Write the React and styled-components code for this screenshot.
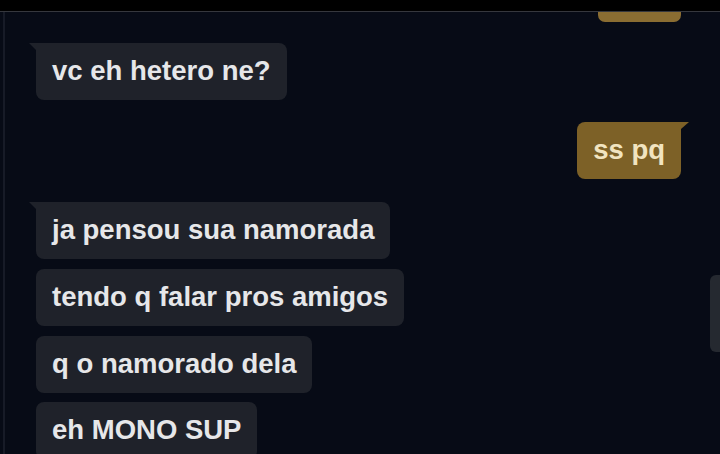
import styled, { createGlobalStyle } from "styled-components";

const GlobalStyle = createGlobalStyle`
  html, body {
    margin: 0;
    padding: 0;
    background: #070b16;
  }
`;

const messages = [
  { id: 1, text: "vc eh hetero ne?", mine: false, first: true, gap: 21 },
  { id: 2, text: "ss pq", mine: true, first: true, gap: 22 },
  { id: 3, text: "ja pensou sua namorada", mine: false, first: true, gap: 23 },
  { id: 4, text: "tendo q falar pros amigos", mine: false, gap: 10 },
  { id: 5, text: "q o namorado dela", mine: false, gap: 10 },
  { id: 6, text: "eh MONO SUP", mine: false, gap: 9 },
];

const App = () => {
  return (
    <>
      <GlobalStyle />
      <Screen>
        <TopBar />
        <Chat>
          <Stub />
          {messages.map((m) => (
            <Row key={m.id} $mine={m.mine} $gap={m.gap}>
              <Bubble $mine={m.mine} $first={m.first}>
                {m.text}
              </Bubble>
            </Row>
          ))}
        </Chat>
        <EdgeTab />
      </Screen>
    </>
  );
};
export default App;

const Screen = styled.div`
  position: relative;
  width: 720px;
  height: 454px;
  overflow: hidden;
  background: #070b16;
  display: flex;
  flex-direction: column;
`;
const TopBar = styled.div`
  height: 11px;
  flex-shrink: 0;
  background: #000;
  border-bottom: 1px solid #35373d;
`;
const Chat = styled.div`
  flex: 1;
  margin-left: 3px;
  border-left: 2px solid #171b27;
  padding: 0 39px 0 31px;
  display: flex;
  flex-direction: column;
`;
const Stub = styled.div`
  align-self: flex-end;
  width: 83px;
  height: 10px;
  background: #8a6d32;
  border-radius: 0 0 7px 7px;
`;
const Row = styled.div`
  display: flex;
  flex-shrink: 0;
  justify-content: ${(p) => (p.$mine ? "flex-end" : "flex-start")};
  margin-top: ${(p) => p.$gap}px;
`;
const Bubble = styled.div`
  position: relative;
  padding: 12px 16px 14px;
  line-height: 31px;
  font-family: "Liberation Sans", Arial, sans-serif;
  font-weight: 700;
  font-size: 27.5px;
  white-space: nowrap;
  border-radius: 8px;
  color: ${(p) => (p.$mine ? "#f1e4c0" : "#e6e7e9")};
  background: ${(p) => (p.$mine ? "#7d6127" : "#1f222a")};
  ${(p) =>
    p.$first &&
    (p.$mine
      ? "border-top-right-radius: 0;"
      : "border-top-left-radius: 0;")}
  &::before {
    content: "";
    display: ${(p) => (p.$first ? "block" : "none")};
    position: absolute;
    top: 0;
    width: 0;
    height: 0;
    border-top: 7px solid ${(p) => (p.$mine ? "#7d6127" : "#1f222a")};
    ${(p) =>
      p.$mine
        ? "right: -8px; border-right: 8px solid transparent;"
        : "left: -7px; border-left: 7px solid transparent;"}
  }
`;
const EdgeTab = styled.div`
  position: absolute;
  left: 710px;
  top: 275px;
  width: 20px;
  height: 77px;
  border-radius: 6px;
  background: #252930;
`;
